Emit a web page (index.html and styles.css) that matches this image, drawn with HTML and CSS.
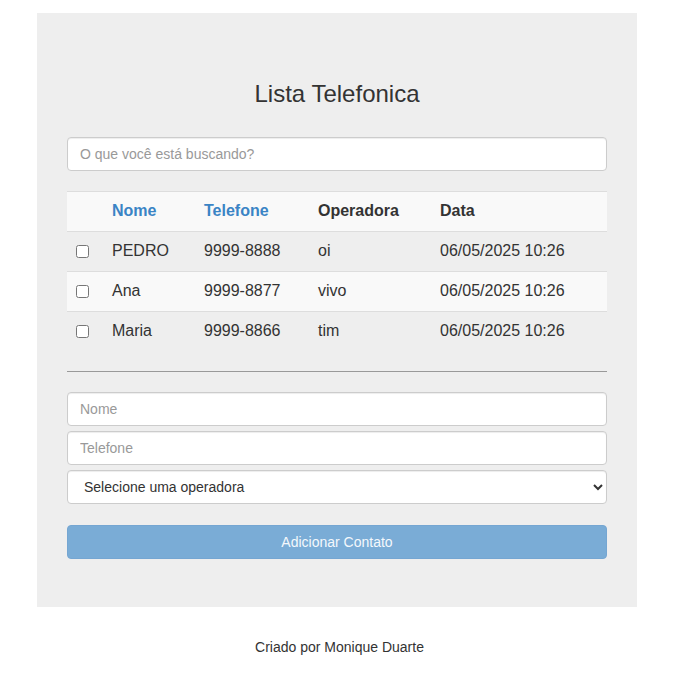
FILE: index.html
```html
<!DOCTYPE html>
<html lang="pt-BR">
<head>
<meta charset="utf-8">
<title>Lista Telefonica</title>
<link rel="stylesheet" href="styles.css">
</head>
<body>
<div class="jumbotron">
  <h3 class="title">Lista Telefonica</h3>
  <input class="form-control search" type="text" placeholder="O que você está buscando?">
  <table class="table">
    <thead>
      <tr>
        <th class="c-check"></th>
        <th class="c-name"><a href="#">Nome</a></th>
        <th class="c-phone"><a href="#">Telefone</a></th>
        <th class="c-op">Operadora</th>
        <th>Data</th>
      </tr>
    </thead>
    <tbody>
      <tr class="odd">
        <td><input type="checkbox"></td>
        <td>PEDRO</td>
        <td>9999-8888</td>
        <td>oi</td>
        <td>06/05/2025 10:26</td>
      </tr>
      <tr class="even">
        <td><input type="checkbox"></td>
        <td>Ana</td>
        <td>9999-8877</td>
        <td>vivo</td>
        <td>06/05/2025 10:26</td>
      </tr>
      <tr class="odd">
        <td><input type="checkbox"></td>
        <td>Maria</td>
        <td>9999-8866</td>
        <td>tim</td>
        <td>06/05/2025 10:26</td>
      </tr>
    </tbody>
  </table>
  <hr class="divider">
  <form class="add-form">
    <input class="form-control" type="text" placeholder="Nome">
    <input class="form-control" type="text" placeholder="Telefone">
    <select class="form-control select">
      <option>Selecione uma operadora</option>
    </select>
    <button class="btn-primary" type="button" disabled>Adicionar Contato</button>
  </form>
</div>
<footer class="footer">Criado por Monique Duarte</footer>
</body>
</html>
```

FILE: styles.css
```css
* { box-sizing: border-box; }

body {
  margin: 0;
  font-family: "Liberation Sans", Arial, sans-serif;
  font-size: 14px;
  line-height: 1.42857;
  color: #333;
  background: #fff;
}

.jumbotron {
  width: 600px;
  margin: 13px 0 0 37px;
  padding: 48px 30px 48px;
  background: #eee;
}

.title {
  margin: 20px 0 30px;
  font-size: 24px;
  font-weight: 400;
  line-height: 1.1;
  text-align: center;
  color: #333;
}

.form-control {
  display: block;
  width: 100%;
  height: 34px;
  padding: 6px 12px;
  font-family: inherit;
  font-size: 14px;
  line-height: 1.42857;
  color: #555;
  background: #fff;
  border: 1px solid #ccc;
  border-radius: 4px;
  box-shadow: inset 0 1px 1px rgba(0,0,0,.075);
  outline: none;
}

.form-control::placeholder { color: #999; }

.search { margin-bottom: 20px; }

.table {
  width: 100%;
  border-collapse: collapse;
  border-spacing: 0;
  font-size: 16px;
  margin-bottom: 19px;
}

.table th,
.table td {
  height: 40px;
  padding: 7px 8px 9px;
  line-height: 23px;
  text-align: left;
  vertical-align: top;
  border-top: 1px solid #ddd;
}

.table th { font-weight: 700; color: #333; }
.table th a { color: #3a84c5; text-decoration: none; }

.table thead tr { background: #f9f9f9; }
.table tr.even { background: #f9f9f9; }

.c-check { width: 37px; }
.c-name { width: 92px; }
.c-phone { width: 114px; }
.c-op { width: 122px; }

.table input[type="checkbox"] {
  display: block;
  margin: 6px 0 0 1px;
  width: 13px;
  height: 13px;
}

.divider {
  margin: 0 0 20px;
  border: 0;
  border-top: 1px solid #999;
}

.add-form {
  display: flex;
  flex-direction: column;
  gap: 5px;
}

.select {
  padding: 6px 12px;
  color: #333;
}

.btn-primary {
  margin-top: 16px;
  height: 34px;
  width: 100%;
  font-family: inherit;
  font-size: 14px;
  color: #f4f8fc;
  background: #7aacd6;
  border: 1px solid #75a6d2;
  border-radius: 4px;
  cursor: not-allowed;
}

.footer {
  padding-top: 31px;
  text-align: center;
  font-size: 14px;
  color: #333;
}
```
